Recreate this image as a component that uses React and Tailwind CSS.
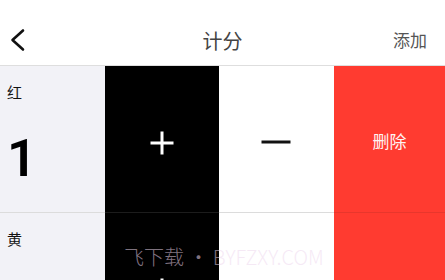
export default function App() {
  const cjk = { fontFamily: '"Noto Sans CJK SC", "Noto Sans", sans-serif' };
  const Row = ({ label, value }) => (
    <div className="flex h-[147px] shrink-0">
      <div className="w-[105px] bg-[#f2f2f7] border-b border-[#dcdcdc] pl-[7px] flex flex-col">
        <div className="mt-[16px] text-[15px] leading-[20px] text-[#111]" style={cjk}>{label}</div>
        <div className="mt-[31px] text-[52px] leading-none font-semibold text-black" style={{ fontFamily: 'Roboto, "Liberation Sans", sans-serif' }}>{value}</div>
      </div>
      <div className="w-[114px] bg-black border-b border-[#1c1c1c] flex items-center justify-center">
        <svg width="26" height="26" viewBox="0 0 26 26" className="mt-[8px]">
          <path d="M13 1.5V24.5M1.5 13H24.5" stroke="#fff" strokeWidth="3" />
        </svg>
      </div>
      <div className="w-[115px] bg-white border-b border-[#dcdcdc] flex items-center justify-center">
        <svg width="30" height="6" viewBox="0 0 30 6" className="mt-[6px] -ml-[1px]">
          <path d="M0.5 3H29.5" stroke="#111" strokeWidth="3" />
        </svg>
      </div>
      <div className="w-[111px] bg-[#ff3b30] border-b border-[#e8362c] flex items-center justify-center">
        <span className="text-[17px] leading-none text-[#fff3f3] mt-[2px]" style={cjk}>删除</span>
      </div>
    </div>
  );
  return (
    <div className="relative w-[445px] h-[280px] overflow-hidden bg-white">
      <div className="h-[66px] border-b border-[#dedede] flex items-center justify-between relative" style={cjk}>
        <svg width="20" height="24" viewBox="0 0 20 24" className="ml-[8px] mt-[15px]">
          <path d="M15 2.5L4.5 12L15 21.5" stroke="#111" strokeWidth="2.6" fill="none" strokeLinecap="round" strokeLinejoin="round" />
        </svg>
        <div className="absolute left-0 right-0 top-[28px] text-center text-[20px] leading-[26px] text-[#444] pointer-events-none">计分</div>
        <div className="mr-[18px] mt-[14px] text-[17px] leading-[24px] text-[#555]">添加</div>
      </div>
      <Row label="红" value="1" />
      <Row label="黄" value="2" />
      <div
        className="absolute left-[124px] top-[244px] text-[20px] leading-[26px] font-light whitespace-nowrap text-[rgba(238,215,238,0.55)]"
        style={{ fontFamily: '"Noto Sans CJK SC", "Noto Sans", sans-serif' }}
      >
        飞下载 • BYFZXY.COM
      </div>
    </div>
  );
}
